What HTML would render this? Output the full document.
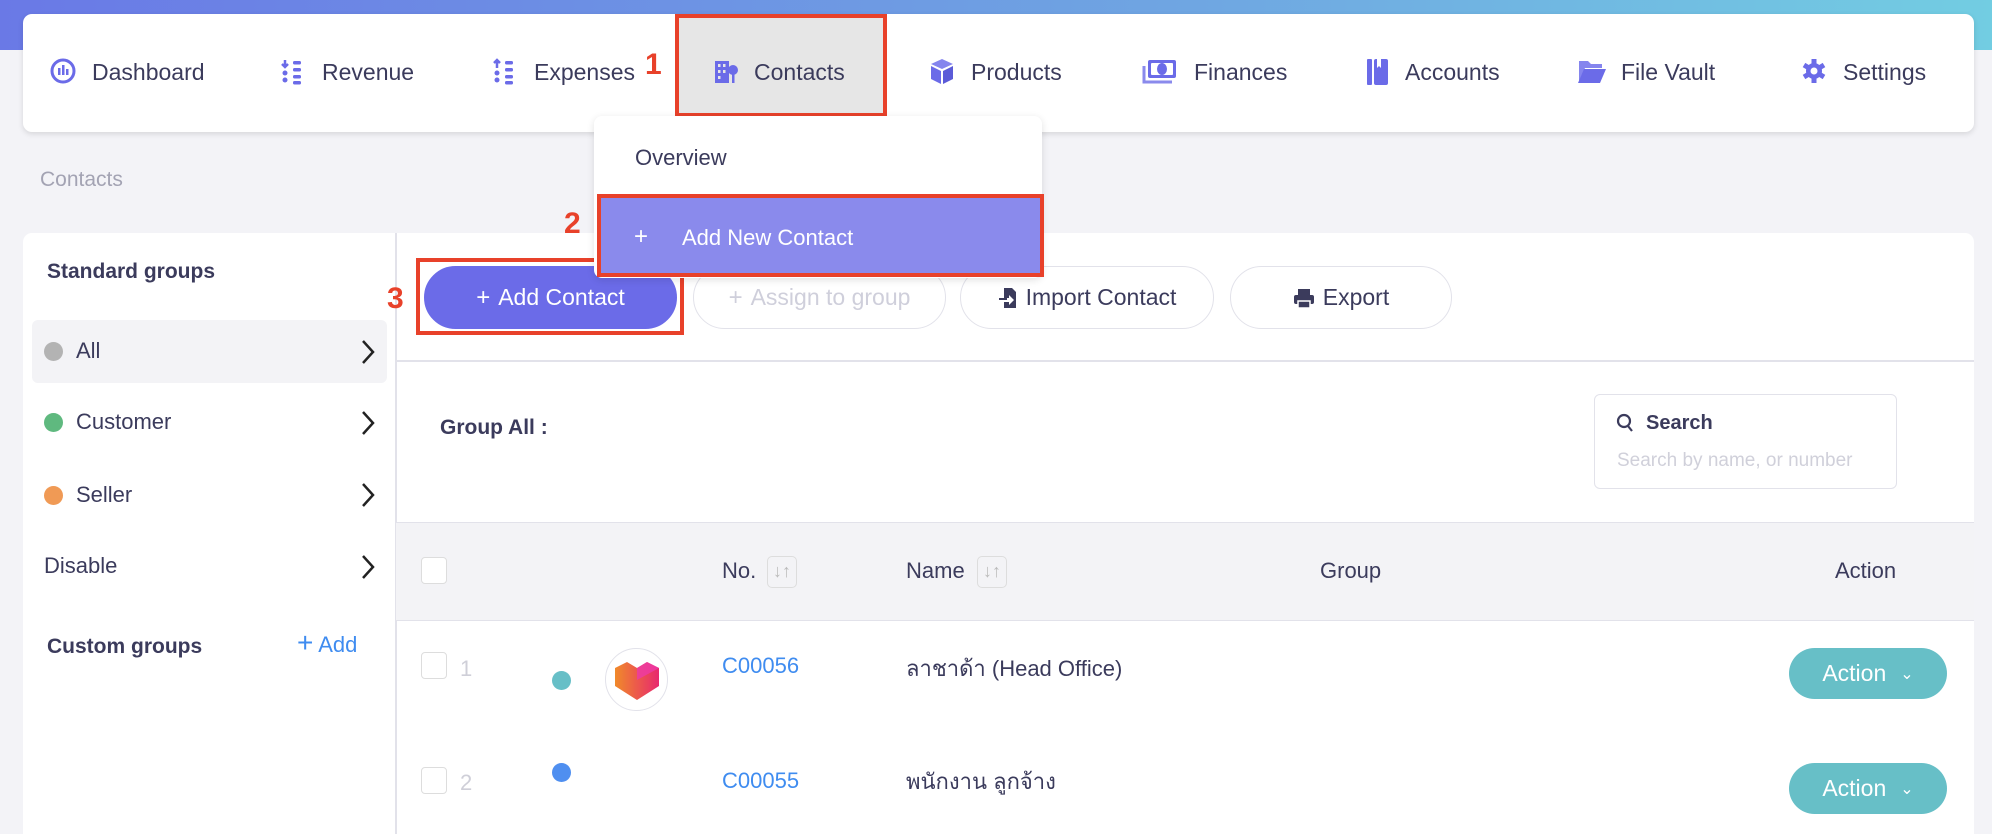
<!DOCTYPE html>
<html style="width:1992px;height:834px;overflow:hidden"><head><meta charset="utf-8"><style>
*{margin:0;padding:0;box-sizing:border-box}
body{width:1992px;height:834px;overflow:hidden;background:#f3f3f7;font-family:"Liberation Sans","Noto Sans CJK SC",sans-serif;color:#3b3b5c;position:relative}
.a{position:absolute}
.grad{left:0;top:0;width:1992px;height:50px;background:linear-gradient(90deg,#6a79e6,#6fa6e2 60%,#72cde2)}
.nav{left:23px;top:14px;width:1951px;height:118px;background:#fff;border-radius:9px;box-shadow:0 2px 6px rgba(0,0,0,.12)}
.ni{font-size:23px;top:58px;color:#3b3b5c;line-height:28px}
.ic{top:56px;width:26px;height:30px}
.red{border:4px solid #e8412a}
.num{color:#e8412a;font-weight:bold;font-size:30px}
.card{background:#fff;border-radius:9px 9px 0 0}
.btn{border:1.5px solid #e2e2ea;border-radius:32px;height:63px;top:266px;font-size:23px;display:flex;align-items:center;justify-content:center;gap:8px}
.chev{left:361px;width:14px;height:26px}
.dot{width:19px;height:19px;border-radius:50%}
.cb{width:26px;height:27px;border:1.5px solid #ddd;border-radius:4px;background:#fff}
.sort{width:30px;height:32px;border:1.5px solid #ddd;border-radius:5px;color:#bbb;font-size:18px;text-align:center;line-height:28px;font-weight:bold}
.act{background:#67bfc7;color:#fff;border-radius:26px;width:158px;height:51px;font-size:23px;display:flex;align-items:center;justify-content:center;gap:14px}
</style></head><body>
<div class="a grad"></div>
<div class="a nav"></div>

<svg class="a ic" style="left:50px" viewBox="0 0 26 30"><circle cx="13" cy="15" r="11" fill="none" stroke="#6b6be8" stroke-width="3"/><rect x="8" y="12" width="2.5" height="7" fill="#6b6be8"/><rect x="12" y="9" width="2.5" height="10" fill="#6b6be8"/><rect x="16" y="13" width="2.5" height="6" fill="#6b6be8"/></svg>
<div class="a ni" style="left:92px">Dashboard</div>
<svg class="a ic" style="left:280px" viewBox="0 0 26 30"><path d="M5 4v7M2 8l3 3 3-3" stroke="#6b6be8" stroke-width="2.5" fill="none"/><g fill="#6b6be8"><circle cx="5" cy="17" r="2.5"/><circle cx="5" cy="24" r="2.5"/><rect x="13" y="5" width="8" height="3.5" rx="1.5"/><rect x="13" y="12" width="8" height="3.5" rx="1.5"/><rect x="13" y="19" width="8" height="3.5" rx="1.5"/><rect x="13" y="25" width="8" height="3.5" rx="1.5"/></g></svg>
<div class="a ni" style="left:322px">Revenue</div>
<svg class="a ic" style="left:492px" viewBox="0 0 26 30"><path d="M5 12V4M2 7l3-3 3 3" stroke="#6b6be8" stroke-width="2.5" fill="none"/><g fill="#6b6be8"><circle cx="5" cy="17" r="2.5"/><circle cx="5" cy="24" r="2.5"/><rect x="13" y="5" width="8" height="3.5" rx="1.5"/><rect x="13" y="12" width="8" height="3.5" rx="1.5"/><rect x="13" y="19" width="8" height="3.5" rx="1.5"/><rect x="13" y="25" width="8" height="3.5" rx="1.5"/></g></svg>
<div class="a ni" style="left:534px">Expenses</div>
<div class="a num" style="left:645px;top:48px">1</div>
<div class="a red" style="left:675px;top:14px;width:212px;height:103px;background:#e6e6e6"></div>
<svg class="a ic" style="left:713px" viewBox="0 0 26 30"><rect x="2" y="5" width="14" height="22" fill="#6b6be8"/><g fill="#e6e6e6"><rect x="5" y="8" width="2.5" height="3"/><rect x="10" y="8" width="2.5" height="3"/><rect x="5" y="14" width="2.5" height="3"/><rect x="10" y="14" width="2.5" height="3"/><rect x="5" y="20" width="2.5" height="3"/></g><circle cx="20" cy="14" r="5" fill="#6b6be8"/><rect x="19" y="18" width="2.5" height="9" fill="#6b6be8"/></svg>
<div class="a ni" style="left:754px">Contacts</div>
<svg class="a ic" style="left:929px" viewBox="0 0 26 30"><path d="M13 3l11 5-11 5-11-5z" fill="#8585ee"/><path d="M2 10l10 5v13L2 23z" fill="#6b6be8"/><path d="M24 10l-10 5v13l10-5z" fill="#5b5bd8"/></svg>
<div class="a ni" style="left:971px">Products</div>
<svg class="a ic" style="left:1142px;width:36px" viewBox="0 0 36 30"><rect x="6" y="4" width="28" height="18" rx="2" fill="#6b6be8"/><rect x="9" y="7" width="22" height="12" rx="1" fill="#fff"/><ellipse cx="20" cy="13" rx="5" ry="6" fill="#6b6be8"/><path d="M2 10v16h28" stroke="#8a8aec" stroke-width="3" fill="none"/></svg>
<div class="a ni" style="left:1194px">Finances</div>
<svg class="a ic" style="left:1365px" viewBox="0 0 26 30"><rect x="2" y="3" width="5" height="26" rx="1" fill="#6b6be8"/><rect x="9" y="3" width="14" height="26" rx="2" fill="#6b6be8"/><path d="M12 3v9l2-2 2 2V3z" fill="#fff"/></svg>
<div class="a ni" style="left:1405px">Accounts</div>
<svg class="a ic" style="left:1577px;width:30px" viewBox="0 0 30 30"><path d="M2 5h9l3 3h11v4H8L2 25z" fill="#8585ee"/><path d="M7 13h22l-6 14H1z" fill="#6b6be8"/></svg>
<div class="a ni" style="left:1621px">File Vault</div>
<svg class="a ic" style="left:1801px" viewBox="0 0 26 30"><circle cx="13" cy="15" r="8" fill="#6b6be8"/><g stroke="#6b6be8" stroke-width="5"><path d="M13 3v24M3 9l20 12M3 21l20-12"/></g><circle cx="13" cy="15" r="3.5" fill="#fff"/></svg>
<div class="a ni" style="left:1843px">Settings</div>

<div class="a" style="left:40px;top:168px;font-size:21px;color:#a3a3b3">Contacts</div>

<div class="a card" style="left:23px;top:233px;width:1951px;height:601px"></div>
<div class="a" style="left:395px;top:233px;width:1.5px;height:601px;background:#e2e2ea"></div>
<div class="a" style="left:395px;top:360px;width:1579px;height:1.5px;background:#e2e2ea"></div>

<div class="a" style="left:47px;top:260px;font-size:21px;font-weight:bold">Standard groups</div>
<div class="a" style="left:32px;top:320px;width:355px;height:63px;background:#f3f3f6;border-radius:6px"></div>
<div class="a dot" style="left:44px;top:342px;background:#b3b3b3"></div>
<div class="a" style="left:76px;top:338px;font-size:22px">All</div>
<svg class="a chev" style="top:339px" viewBox="0 0 14 26"><path d="M2 2l10 11L2 24" stroke="#222" stroke-width="2.5" fill="none"/></svg>
<div class="a dot" style="left:44px;top:413px;background:#5fb97f"></div>
<div class="a" style="left:76px;top:409px;font-size:22px">Customer</div>
<svg class="a chev" style="top:410px" viewBox="0 0 14 26"><path d="M2 2l10 11L2 24" stroke="#222" stroke-width="2.5" fill="none"/></svg>
<div class="a dot" style="left:44px;top:486px;background:#f09a55"></div>
<div class="a" style="left:76px;top:482px;font-size:22px">Seller</div>
<svg class="a chev" style="top:482px" viewBox="0 0 14 26"><path d="M2 2l10 11L2 24" stroke="#222" stroke-width="2.5" fill="none"/></svg>
<div class="a" style="left:44px;top:553px;font-size:22px">Disable</div>
<svg class="a chev" style="top:554px" viewBox="0 0 14 26"><path d="M2 2l10 11L2 24" stroke="#222" stroke-width="2.5" fill="none"/></svg>
<div class="a" style="left:47px;top:635px;font-size:21px;font-weight:bold">Custom groups</div>
<div class="a" style="left:297px;top:632px;font-size:22px;color:#3f8cf0"><span style="font-size:28px;line-height:20px">+</span> Add</div>

<div class="a btn" style="left:424px;width:253px;background:#6b6be8;color:#fff;border-color:#6b6be8"><span style="font-size:24px">+</span>Add Contact</div>
<div class="a red" style="left:416px;top:258px;width:268px;height:77px"></div>
<div class="a num" style="left:387px;top:282px">3</div>
<div class="a btn" style="left:693px;width:253px;color:#cfcfdb"><span style="font-size:24px">+</span>Assign to group</div>
<div class="a btn" style="left:960px;width:254px"><svg width="20" height="24" viewBox="0 0 20 24"><path d="M6 2h8l4 4v16H6v-6h5v3l5-5-5-5v3H6z" fill="#3b3b5c"/><path d="M1 13h8" stroke="#3b3b5c" stroke-width="2"/></svg>Import Contact</div>
<div class="a btn" style="left:1230px;width:222px"><svg width="22" height="22" viewBox="0 0 22 22"><rect x="5" y="2" width="12" height="6" fill="#3b3b5c"/><rect x="1" y="8" width="20" height="9" rx="2" fill="#3b3b5c"/><rect x="5" y="14" width="12" height="7" fill="#3b3b5c" stroke="#fff" stroke-width="1.5"/></svg>Export</div>

<div class="a" style="left:594px;top:116px;width:448px;height:162px;background:#fff;border-radius:8px;box-shadow:0 2px 8px rgba(0,0,0,.12)"></div>
<div class="a" style="left:635px;top:145px;font-size:22px">Overview</div>
<div class="a red" style="left:597px;top:194px;width:447px;height:83px;background:#8a8aec"></div>
<div class="a" style="left:634px;top:222px;font-size:24px;color:#fff;line-height:30px">+</div>
<div class="a" style="left:682px;top:225px;font-size:22px;color:#fff">Add New Contact</div>
<div class="a num" style="left:564px;top:207px">2</div>

<div class="a" style="left:440px;top:416px;font-size:21px;font-weight:bold">Group All :</div>
<div class="a" style="left:1594px;top:394px;width:303px;height:95px;border:1.5px solid #e2e2ea;border-radius:6px"></div>
<svg class="a" style="left:1616px;top:413px" width="18" height="20" viewBox="0 0 18 20"><circle cx="8" cy="8" r="6" fill="none" stroke="#3b3b5c" stroke-width="2.2"/><path d="M12 13l4 5" stroke="#3b3b5c" stroke-width="2.2"/></svg>
<div class="a" style="left:1646px;top:412px;font-size:20px;font-weight:bold">Search</div>
<div class="a" style="left:1617px;top:450px;font-size:19px;color:#d0d0da;width:265px;overflow:hidden;white-space:nowrap">Search by name, or number</div>

<div class="a" style="left:396px;top:522px;width:1578px;height:99px;background:#f3f3f6;border-top:1.5px solid #e2e2ea;border-bottom:1.5px solid #e2e2ea"></div>
<div class="a cb" style="left:421px;top:557px"></div>
<div class="a" style="left:722px;top:558px;font-size:22px">No.</div>
<div class="a sort" style="left:767px;top:556px">&#8595;&#8593;</div>
<div class="a" style="left:906px;top:558px;font-size:22px">Name</div>
<div class="a sort" style="left:977px;top:556px">&#8595;&#8593;</div>
<div class="a" style="left:1320px;top:558px;font-size:22px">Group</div>
<div class="a" style="left:1835px;top:558px;font-size:22px">Action</div>

<div class="a cb" style="left:421px;top:652px"></div>
<div class="a" style="left:460px;top:656px;font-size:22px;color:#cfcfd8">1</div>
<div class="a dot" style="left:552px;top:671px;background:#67bfc7"></div>
<div class="a" style="left:605px;top:648px;width:63px;height:63px;border-radius:50%;border:1.5px solid #e2e2ea;background:#fff"></div>
<svg class="a" style="left:609px;top:660px" width="56" height="42" viewBox="0 0 56 42"><defs><linearGradient id="g" x1="0" x2="1"><stop offset="0" stop-color="#f08a2a"/><stop offset="1" stop-color="#e8286e"/></linearGradient></defs><path d="M6 8l12-6 10 6 10-6 12 6v18L28 40 6 26z" fill="url(#g)"/><path d="M28 8l10-6 12 6L28 20z" fill="#ee3aa8" opacity=".8"/></svg>
<div class="a" style="left:722px;top:653px;font-size:22px;color:#3f8cf0">C00056</div>
<div class="a" style="left:906px;top:651px;font-size:22px">ลาชาด้า (Head Office)</div>
<div class="a act" style="left:1789px;top:648px">Action <span style="font-size:16px">&#8964;</span></div>

<div class="a cb" style="left:421px;top:767px"></div>
<div class="a" style="left:460px;top:770px;font-size:22px;color:#cfcfd8">2</div>
<div class="a dot" style="left:552px;top:763px;background:#4f8ff0"></div>
<div class="a" style="left:722px;top:768px;font-size:22px;color:#3f8cf0">C00055</div>
<div class="a" style="left:906px;top:764px;font-size:22px">พนักงาน ลูกจ้าง</div>
<div class="a act" style="left:1789px;top:763px">Action <span style="font-size:16px">&#8964;</span></div>
</body></html>
